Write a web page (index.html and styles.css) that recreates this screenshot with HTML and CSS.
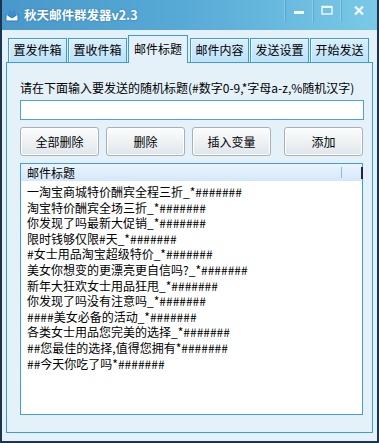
FILE: index.html
```html
<!DOCTYPE html>
<html lang="zh-CN">
<head>
    <meta charset="UTF-8" />
    <title>秋天邮件群发器v2.3</title>
    <link rel="stylesheet" href="styles.css">
</head>
<body>
    <div class="window">
        <!-- Title bar -->
        <div class="titlebar">
            <svg class="app-icon" width="14" height="14" viewBox="0 0 14 14">
                <path d="M1 6 L7 1.5 L13 6 L13 13 L1 13 Z" fill="#ffffff" stroke="#2f78b5" stroke-width="1"/>
                <path d="M2.5 5 L7 2 L11.5 5 L11.5 7.5 L7 10 L2.5 7.5 Z" fill="#3a8fd0"/>
                <path d="M1 6 L7 10 L13 6" fill="none" stroke="#2f78b5" stroke-width="1"/>
            </svg>
            <span class="app-title">秋天邮件群发器v2.3</span>
            <div class="win-controls">
                <div class="win-btn">
                    <svg width="12" height="12" viewBox="0 0 12 12"><rect x="1" y="6" width="10" height="3" fill="#f2f8fc"/></svg>
                </div>
                <div class="win-btn">
                    <svg width="12" height="12" viewBox="0 0 12 12"><rect x="1" y="1.5" width="10" height="7.5" fill="none" stroke="#f2f8fc" stroke-width="1.4"/><rect x="1" y="1" width="10" height="2" fill="#f2f8fc"/></svg>
                </div>
                <div class="win-btn close">
                    <svg width="12" height="12" viewBox="0 0 12 12"><path d="M2 1.5 L10 9.5 M10 1.5 L2 9.5" stroke="#f2f8fc" stroke-width="2.4"/></svg>
                </div>
            </div>
        </div>

        <div class="window-body">
            <!-- Tabs -->
            <div class="tabs">
                <a class="tab">置发件箱</a>
                <a class="tab">置收件箱</a>
                <a class="tab active">邮件标题</a>
                <a class="tab">邮件内容</a>
                <a class="tab">发送设置</a>
                <a class="tab">开始发送</a>
            </div>

            <!-- Subject tab page -->
            <div class="panel">
                <p class="hint">请在下面输入要发送的随机标题(#数字0-9,*字母a-z,%随机汉字)</p>
                <input class="subject-input" type="text">
                <div class="actions">
                    <button class="btn">全部删除</button>
                    <button class="btn">删除</button>
                    <button class="btn">插入变量</button>
                    <button class="btn btn-add">添加</button>
                </div>
                <div class="listbox">
                    <div class="list-header">
                        <span>邮件标题</span>
                        <i class="col-sep"></i>
                        <i class="col-end"></i>
                    </div>
                    <ul class="subject-list">
                        <li>一淘宝商城特价酬宾全程三折_*#######</li>
                        <li>淘宝特价酬宾全场三折_*#######</li>
                        <li>你发现了吗最新大促销_*#######</li>
                        <li>限时钱够仅限#天_*#######</li>
                        <li>#女士用品淘宝超级特价_*#######</li>
                        <li>美女你想变的更漂亮更自信吗?_*#######</li>
                        <li>新年大狂欢女士用品狂甩_*#######</li>
                        <li>你发现了吗没有注意吗_*#######</li>
                        <li>####美女必备的活动_*#######</li>
                        <li>各类女士用品您完美的选择_*#######</li>
                        <li>##您最佳的选择,值得您拥有*#######</li>
                        <li>##今天你吃了吗*#######</li>
                    </ul>
                </div>
            </div>
        </div>
    </div>
</body>
</html>
```

FILE: styles.css
```css
/* --- Reset --- */
* {
    margin: 0;
    padding: 0;
    box-sizing: border-box;
}

body {
    font-family: "Noto Sans CJK SC", "DejaVu Sans", sans-serif;
    font-size: 12px;
    color: #000;
    background: #e4f1f9;
}

/* --- Window frame --- */
.window {
    width: 379px;
    height: 443px;
    background: #e4f1f9;
    border-left: 2px solid #1b3452;
    border-right: 2px solid #1b3452;
    border-bottom: 2px solid #1b3452;
    display: flex;
    flex-direction: column;
}

/* --- Title bar --- */
.titlebar {
    height: 30px;
    display: flex;
    align-items: flex-start;
    background: linear-gradient(90deg, #4899ca 0%, #56a8d5 45%, #79c9e6 100%);
    position: relative;
}

.app-icon {
    margin: 8px 0 0 3px;
}

.app-title {
    margin: 7px 0 0 5px;
    line-height: 16px;
    color: #fff;
    font-weight: bold;
    font-size: 12.5px;
    text-shadow: 0 0 2px rgba(20, 70, 120, 0.5);
}

.win-controls {
    margin-left: auto;
    display: flex;
    height: 22px;
}

.win-btn {
    width: 28px;
    display: flex;
    justify-content: center;
    align-items: center;
    border-left: 1px solid rgba(255, 255, 255, 0.22);
    box-shadow: inset 1px 0 0 rgba(40, 100, 150, 0.25);
}

.win-btn.close {
    width: 37px;
}

/* --- Body / tabs --- */
.window-body {
    flex: 1;
    padding: 5px 4px 8px 4px;
    display: flex;
    flex-direction: column;
}

.tabs {
    display: flex;
    align-items: flex-end;
    gap: 1px;
    padding-left: 2px;
    height: 27px;
    position: relative;
    z-index: 1;
}

.tab {
    width: 59px;
    height: 24px;
    line-height: 22px;
    text-align: center;
    border: 1px solid #3b9be0;
    border-bottom: none;
    box-shadow: inset 1px 1px 0 #f4fbff;
    background: linear-gradient(#d9effc, #bde2f7);
    cursor: pointer;
}

.tab.active {
    width: 60px;
    height: 28px;
    margin-bottom: -1px;
    line-height: 26px;
    background: #e4f1f9;
    box-shadow: none;
    margin-right: 1px;
}

/* --- Tab page --- */
.panel {
    height: 371px;
    border: 1px solid #3b9be0;
    background: #e4f1f9;
    padding: 17px 9px 0 13px;
}

.hint {
    line-height: 16px;
    white-space: nowrap;
}

.subject-input {
    display: block;
    width: 344px;
    height: 20px;
    margin-top: 4px;
    border: 1px solid #4aa3df;
    background: #fff;
    outline: none;
}

.actions {
    display: flex;
    gap: 7px;
    margin-top: 7px;
}

.btn {
    width: 79px;
    height: 29px;
    font-family: inherit;
    font-size: 12px;
    color: #000;
    border: 1px solid #a7b1bb;
    border-radius: 3px;
    background: linear-gradient(#fbfcfd, #f0f3f5 45%, #dfe5ea);
    box-shadow: inset 0 0 0 1px #fff;
}

.btn-add {
    margin-left: auto;
}

/* --- List box --- */
.listbox {
    margin-top: 7px;
    height: 252px;
    border: 1px solid #3d9fe2;
    background: #fff;
}

.list-header {
    height: 17px;
    line-height: 17px;
    padding-left: 6px;
    background: linear-gradient(#eaf4fd, #d4e8f9);
    position: relative;
}

.col-sep {
    position: absolute;
    left: 320px;
    top: 3px;
    width: 1px;
    height: 11px;
    background: #86bce8;
}

.col-end {
    position: absolute;
    left: 340px;
    top: 3px;
    width: 2px;
    height: 12px;
    background: #1e2a38;
}

.subject-list {
    list-style: none;
    padding: 3px 0 0 6px;
}

.subject-list li {
    line-height: 15.6px;
    height: 15.6px;
    white-space: nowrap;
}
```
